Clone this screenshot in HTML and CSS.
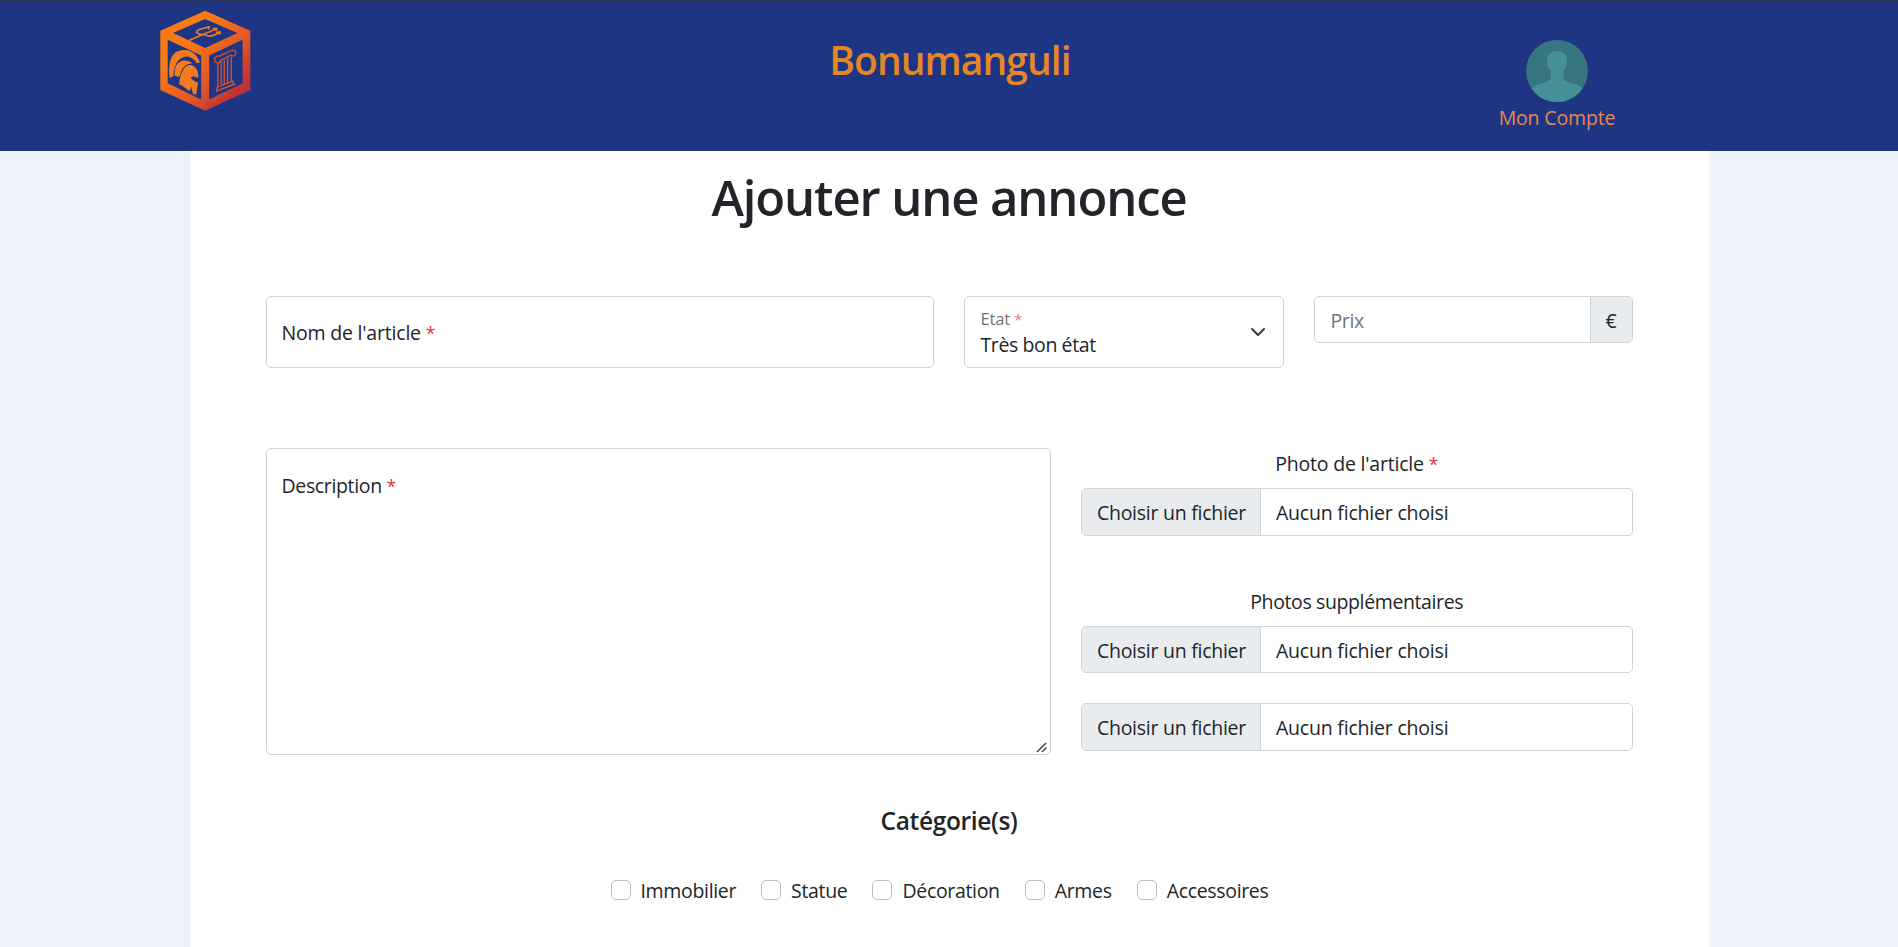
FILE: index.html
```html
<!DOCTYPE html>
<html lang="fr">
<head>
<meta charset="utf-8">
<title>Bonumanguli</title>
<link rel="stylesheet" href="styles.css">
</head>
<body>
<header class="site-header">
  <a class="logo" aria-label="Accueil">
    <svg viewBox="60 30 272 306" width="91" height="101" preserveAspectRatio="none">
      <defs>
        <linearGradient id="fire" x1="0" y1="0" x2="1" y2="1">
          <stop offset=".3" stop-color="#f97a15"/>
          <stop offset=".6" stop-color="#e25a25"/>
          <stop offset=".85" stop-color="#bd3038"/>
        </linearGradient>
      </defs>
      <path fill="url(#fire)" fill-rule="evenodd" d="M195 32 330 93V272L195 335 61 272V93ZM195 57 99 100 195 145 291 100ZM83 120V252L183 301V168ZM307 120V252L207 301V168Z"/>
      <g fill="#f37a1d">
        <path d="M89 236C84 195 90 164 114 154C147 143 174 164 179 190L170 191C158 170 135 165 119 179C106 190 101 212 100 231Z"/>
        <path d="M104 230C102 200 113 184 133 183C143 183 152 187 157 192C137 192 124 204 119 232Z"/>
        <path d="M117 255C121 213 137 192 154 197C169 203 177 218 174 236L160 231 151 235 163 246 174 250 168 287 158 284 153 262 149 276C138 268 128 259 117 255Z"/>
      </g>
      <g fill="none" stroke="#ef7821" stroke-width="5" stroke-linecap="round" stroke-linejoin="round">
        <path d="M148 122 229 87M191 103C172 106 162 96 176 90L206 81M191 103C204 113 222 109 240 96M198 84 207 81 205 87M219 86 230 86 228 92M230 98 240 96 239 102"/>
      </g>
      <g fill="none" stroke="#d84f2e" stroke-width="4" stroke-linejoin="round">
        <path d="M224 184C220 173 229 168 238 170L275 152C286 150 290 160 284 167C281 171 276 170 273 166L240 184C238 194 228 193 224 184ZM233 193V264M243 186V260M252 182V255M262 177V251M273 172V247M231 264 279 245V255L229 276ZM229 276 286 254"/>
      </g>
    </svg>
  </a>
  <h1 class="brand">Bonumanguli</h1>
  <a class="account">
    <svg viewBox="0 0 62 62" width="62" height="62">
      <defs><clipPath id="disc"><circle cx="31" cy="31" r="31"/></clipPath></defs>
      <g clip-path="url(#disc)">
        <path fill="#377582" d="M0 0H62V62H0Z"/>
        <path fill="#458f99" d="M31 11C38 11 41.500 15 41 22C40.700 27 39 29 37.500 31V37C37.500 41 41 42 45 43C51 44.500 55 47 59 50V62H3V50C7 47 11 44.500 17 43C21 42 25 41 25 37V31C23 29 21.300 27 21 22C20.500 15 24 11 31 11Z"/>
      </g>
    </svg>
    <span class="account-label">Mon Compte</span>
  </a>
</header>
<main class="panel">
  <h2 class="title">Ajouter une annonce</h2>
  <form>
    <div class="row row-main">
      <div class="field field-name"><label>Nom de l'article <i>*</i></label></div>
      <div class="field field-state">
        <div class="stack"><small>Etat <i>*</i></small><span class="state-value">Très bon état</span></div>
        <svg class="chevron" viewBox="0 0 16 16" width="16" height="16"><path fill="none" stroke="#343a40" stroke-linecap="round" stroke-linejoin="round" stroke-width="2" d="m2 5 6 6 6-6"/></svg>
      </div>
      <div class="price"><span class="price-value">Prix</span><span class="euro">€</span></div>
    </div>
    <div class="row row-detail">
      <div class="field description">
        <label>Description <i>*</i></label>
        <svg class="grip" viewBox="0 0 12 12" width="12" height="12"><path stroke="#444" stroke-width="1.500" d="M1 11 10 2M6 11 10.500 6.500"/></svg>
      </div>
      <div class="photos">
        <p class="caption">Photo de l'article <i>*</i></p>
        <div class="file file-main"><span class="file-button">Choisir un fichier</span><span class="file-name">Aucun fichier choisi</span></div>
        <p class="caption caption-extra">Photos supplémentaires</p>
        <div class="file"><span class="file-button">Choisir un fichier</span><span class="file-name">Aucun fichier choisi</span></div>
        <div class="file file-last"><span class="file-button">Choisir un fichier</span><span class="file-name">Aucun fichier choisi</span></div>
      </div>
    </div>
    <h3 class="subtitle">Catégorie(s)</h3>
    <div class="checks">
      <label class="check"><span class="box"></span><span>Immobilier</span></label>
      <label class="check"><span class="box"></span><span>Statue</span></label>
      <label class="check"><span class="box"></span><span>Décoration</span></label>
      <label class="check"><span class="box"></span><span>Armes</span></label>
      <label class="check"><span class="box"></span><span>Accessoires</span></label>
    </div>
  </form>
</main>
</body>
</html>
```

FILE: styles.css
```css
* { box-sizing: border-box; }
body {
  margin: 0;
  height: 947px;
  overflow: hidden;
  background: #edf2fb;
  color: #212529;
  font-family: "Open Sans", "Noto Sans", sans-serif;
  font-size: 19.5px;
  letter-spacing: -.2px;
  line-height: 30px;
  white-space: nowrap;
}
h1, h2, h3, p { margin: 0; }
i { color: #dc3545; font-style: normal; font-size: .9em; }
.site-header {
  display: grid;
  grid-template-columns: 318px 1fr 270px;
  height: 151px;
  padding: 0 206px 0 160px;
  background: #1d3583;
  border-top: 1px solid #2a3656;
  border-bottom: 1px solid #28356f;
}
.logo { padding-top: 9px; }
.logo svg, .account svg { display: block; }
.brand {
  padding-top: 35px;
  text-align: center;
  font-size: 39px;
  font-weight: 600;
  letter-spacing: -.95px;
  line-height: 48px;
  color: #e48727;
}
.account {
  display: flex;
  flex-direction: column;
  align-items: center;
  padding-top: 39px;
  color: #e58a51;
}
.account-label { margin-top: 1px; letter-spacing: -.15px; }
.panel {
  width: 1519px;
  height: 796px;
  margin: 0 auto;
  padding: 16px 76px 0;
  background: #fff;
}
.title { text-align: center; font-size: 49px; font-weight: 600; letter-spacing: -1.1px; line-height: 60px; }
.row { display: flex; gap: 30px; }
.row-main { margin-top: 69px; align-items: flex-start; }
.field { border: 1px solid #ced4da; border-radius: 5px; }
.field-name { width: 668px; height: 72px; padding: 21px 15px; }
.field-state {
  display: flex;
  justify-content: space-between;
  align-items: center;
  width: 320px;
  height: 72px;
  padding: 0 17px 0 16px;
}
.stack { display: flex; flex-direction: column; margin-top: -2px; line-height: 25px; }
.stack small { font-size: 16.6px; letter-spacing: -.2px; opacity: .65; }
.state-value { letter-spacing: -.4px; }
.price { display: flex; width: 319px; height: 47px; border: 1px solid #ced4da; border-radius: 5px; line-height: 48px; }
.price-value { flex: 1; padding-left: 16px; color: #6c757d; letter-spacing: -.4px; }
.euro { width: 42px; text-align: center; background: #e9ecef; border-left: 1px solid #ced4da; }
.row-detail { margin-top: 80px; }
.description { position: relative; width: 786px; height: 307px; padding: 22px 15px; letter-spacing: -.35px; }
.grip { position: absolute; right: 2px; bottom: 1px; }
.photos { width: 552px; }
.caption { text-align: center; }
.file { display: flex; height: 47px; border: 1px solid #ced4da; border-radius: 5px; line-height: 48px; overflow: hidden; }
.photos .caption { height: 40px; padding-top: 1px; }
.file-main, .file-last { height: 48px; }
.photos .caption-extra { margin-top: 50px; letter-spacing: -.38px; }
.file-button { width: 179px; padding-left: 15px; background: #e9ecef; border-right: 1px solid #ced4da; letter-spacing: -.26px; }
.file-name { padding-left: 15px; }
.photos .file-last { margin-top: 30px; }
.subtitle { margin-top: 51px; text-align: center; font-size: 24.5px; font-weight: 600; letter-spacing: -.35px; }
.checks { display: flex; margin-left: 345px; margin-top: 40px; gap: 25px; letter-spacing: -.33px; }
.check { display: flex; align-items: center; gap: 10px; }
.box { width: 20px; height: 20px; margin-top: -2px; border: 1px solid #bfbfbf; border-radius: 5px; }
```
